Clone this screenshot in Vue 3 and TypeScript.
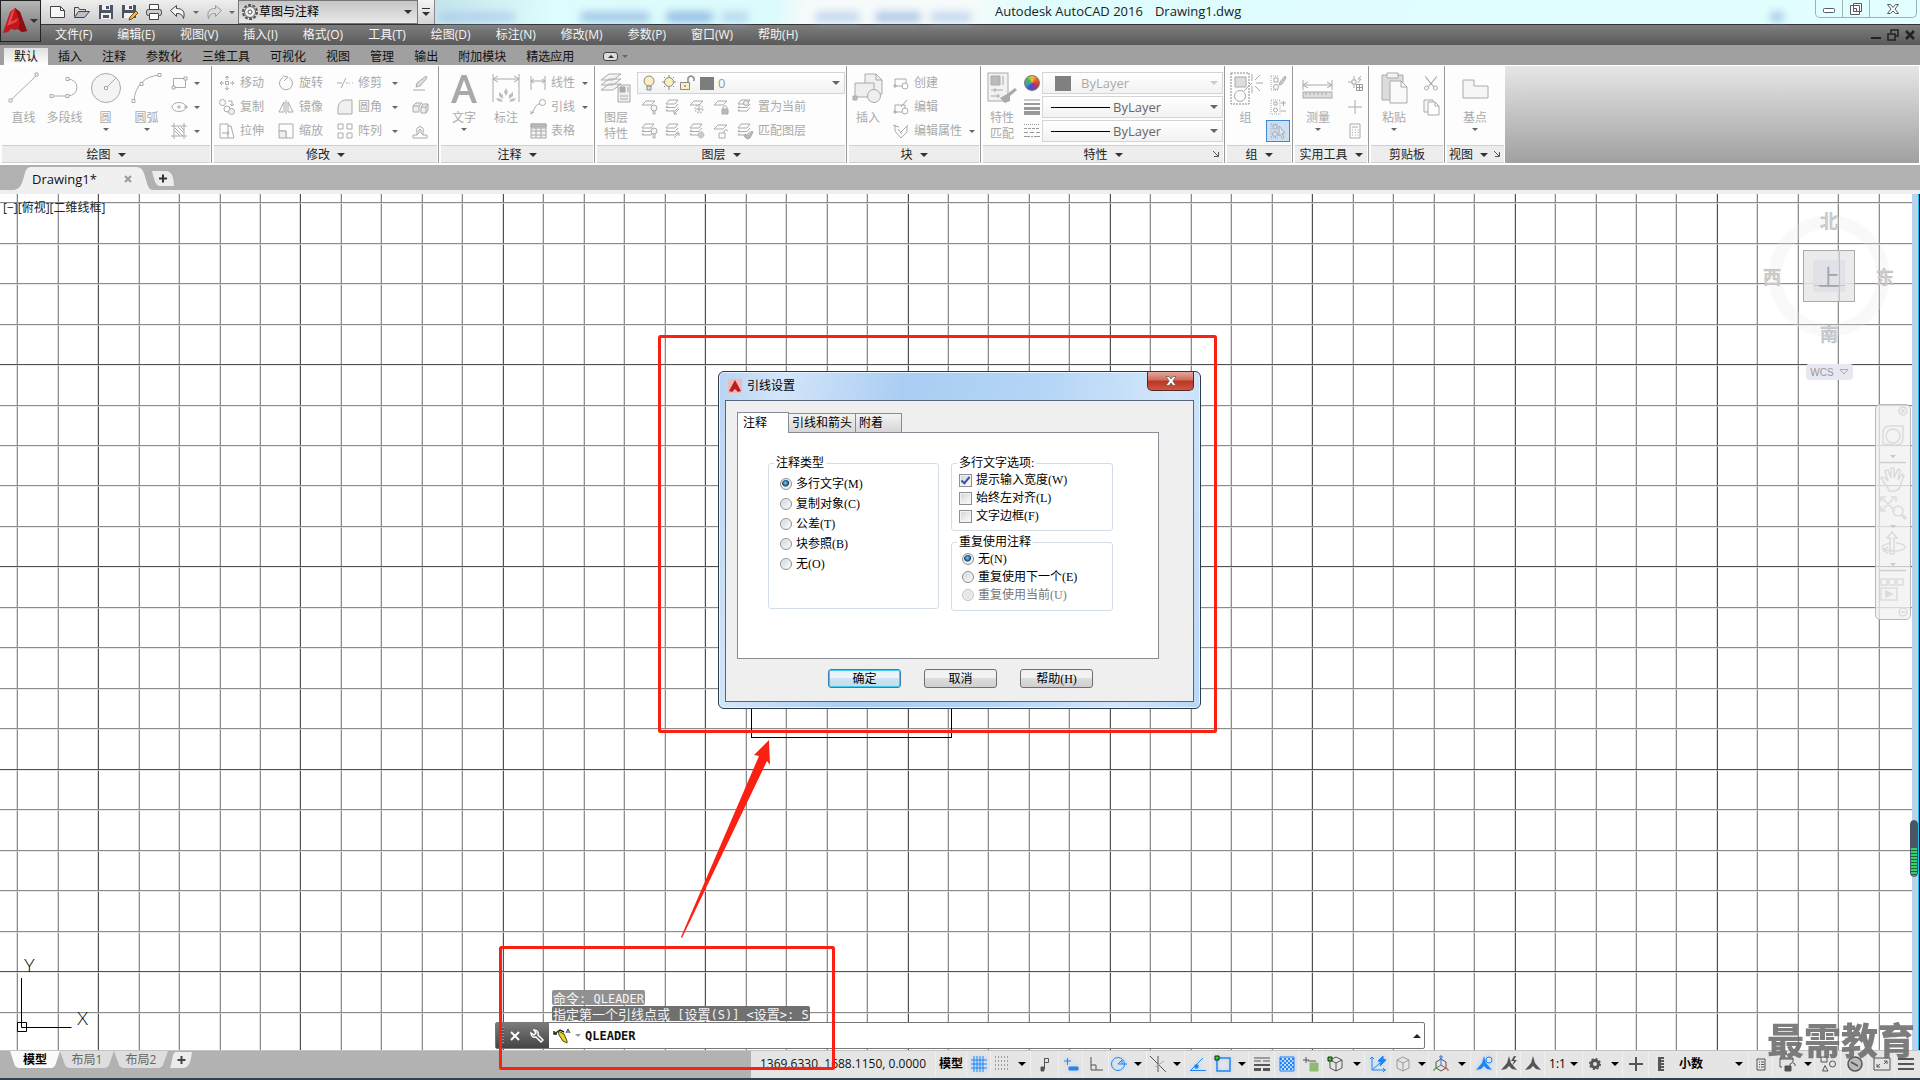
<script setup lang="ts">
import { ref } from 'vue'

interface Tool {
  icon: string
  label?: string
  arrow?: boolean
  active?: boolean
}
interface BigTool {
  icon: string
  lines: string[]
  arrow?: boolean
}
interface StatusItem {
  icon: string
  w: number
  name: string
  on?: boolean
}

const menus = ['文件(F)', '编辑(E)', '视图(V)', '插入(I)', '格式(O)', '工具(T)', '绘图(D)', '标注(N)', '修改(M)', '参数(P)', '窗口(W)', '帮助(H)']
const tabs = ['默认', '插入', '注释', '参数化', '三维工具', '可视化', '视图', '管理', '输出', '附加模块', '精选应用']

const layerStack = '<path d="M1 5l3-4h9l-3 4zM1 8.500h9l3-3.500M1 12h9l3-3.500M1 8.500l1.500-2M1 12l1.500-2"/>'
const person = '<path fill="currentColor" stroke="none" d="M8 0l2 7 6 7-5-1-3-3-3 3-5 1 6-7z"/>'
const cube = '<path d="M8 1l6 3v8l-6 3-6-3V4zM2 4l6 3 6-3M8 7v8"/>'

const icons: Record<string, string> = {
  // large ribbon glyphs, 32 x 32
  line: '<path d="M3 29L29 4"/><path fill="#fff" d="M1 28h3v3H1zM27 2h3v3h-3z"/>',
  polyline: '<path d="M2 25h17a9 8.500 0 0 0 0-17"/><path fill="#fff" d="M1 23.500h3v3H1zM17 23.500h3v3h-3zM17 6.500h3v3h-3z"/>',
  circle: '<circle cx="16" cy="17" r="14.500" fill="#f4f4f4"/><path d="M16 17L26 7"/><path fill="#fff" d="M14.500 15.500h3v3h-3z"/>',
  arc: '<path d="M3 30C4 14 14 5 29 4"/><path fill="#fff" d="M1 28.500h3v3H1zM9 11.500h3v3H9zM27 2.500h3v3h-3z"/>',
  text: '<path fill="#a9a9a9" stroke="none" fill-rule="evenodd" d="M13.500 4h5L29 32h-5l-3-8H11l-3 8H3zM16 9l-4 11h8z"/>',
  dimension: '<path d="M3 3v28M29 3v28M3 8h26M8 5L3 8l5 3M24 5l5 3-5 3"/><path fill="#bdbdbd" stroke="none" d="M16 17l2 4-2 4-2-4zM9 21l4 3v4l-4-3zM23 21l-4 3v4l4-3zM6 27l5 1 2 3-5-1zM26 27l-5 1-2 3 5-1z"/>',
  layers: '<path fill="#f4f4f4" d="M1 19l8-6h12l-8 6zM1 14l8-6h12l-8 6zM1 9l8-6h12l-8 6z"/><rect x="18" y="14" width="12" height="17" fill="#eee"/><path fill="#aaa" d="M20 16h5v5h-5z"/><path d="M28 16v5M20 25h8M20 28h8"/>',
  insert: '<path fill="#f0f0f0" d="M13 3h11l6 6v14H13z"/><path d="M24 3v6h6"/><path fill="#eee" d="M3 12h19v14H3z"/><circle cx="22" cy="25" r="6.500" fill="#eee"/><path fill="#bbb" d="M1 25h4v4H1z"/>',
  match: '<rect x="2" y="2" width="20" height="28" fill="#f2f2f2"/><path fill="#bbb" d="M5 5h9v9H5z"/><path d="M17 5v9M5 19h12M9 17v4M5 25h9M12 23v4"/><path fill="#aaa" stroke="none" d="M29 17l2 2-7 6v5l-5 2-5-5 7-4z"/>',
  group: '<rect x="1" y="2" width="18" height="31" stroke-dasharray="2 1" stroke="#888"/><path fill="#ddd" d="M5 6h11v10H5z"/><circle cx="10" cy="25" r="5.500"/><path d="M14 20l8-8M22 3v7M22 15v7M26 12h7M25 9l5-5M25 15l5 5"/>',
  measure: '<path d="M1 9v10M30 9v10M1 14h29M6 11l-5 3 5 3M25 11l5 3-5 3"/><rect x="1" y="21" width="29" height="6" fill="#ddd"/><path d="M4 21v3M8 21v3M12 21v3M16 21v3M20 21v3M24 21v3"/>',
  paste: '<path fill="#dcdcdc" d="M4 4h21v25H4z"/><path fill="#f4f4f4" d="M9 2h11v5H9z"/><path fill="#fafafa" d="M12 10h11l6 6v16H12z"/><path d="M23 10v6h6"/>',
  base: '<path fill="#f6f6f6" d="M4 9h11v6h14v12H4z"/>',
  // small ribbon glyphs, 16 x 16
  rect: '<path d="M2.500 3.500h12v9h-12z"/><path fill="#fff" d="M1 11h3v3H1zM13 2h3v3h-3z"/>',
  ellipse: '<ellipse cx="8" cy="8" rx="7" ry="4.500"/><path d="M8 6v4M6 8h4M14 7h2v2h-2z"/>',
  hatch: '<path d="M3 0v16M13 0v16M0 3h16M0 13h16M4 8l5 5M4 5l8 8M7 4l6 6M10 4l3 3"/>',
  move: '<path d="M8 1v4M8 11v4M1 8h4M11 8h4M6 3l2-2 2 2M6 13l2 2 2-2M3 6L1 8l2 2M13 6l2 2-2 2M6.500 6.500h3v3h-3z"/>',
  rotate: '<path d="M11 2.500A6.500 6.500 0 1 1 5 2.500M5 1l5 1-4 4"/>',
  trim: '<path d="M0 8h5M4 13L9 3M9 8h2M12 8h1M15 8h1"/>',
  erase: '<path fill="#ddd" d="M14 1l1 2-7 8-4 1 1-4z"/><path d="M1 15h12"/>',
  copy: '<circle cx="3.500" cy="3.500" r="3"/><circle cx="8" cy="10" r="3"/><circle cx="12.500" cy="12.500" r="3" fill="#eee"/><path d="M9 2h4v4M11 5l2 2 2-2"/>',
  mirror: '<path d="M8 1v14M6 3v10H1zM10 3v10h5z"/>',
  fillet: '<path fill="#f0f0f0" d="M1 15V9c0-5 4-8 8-8h6v14z"/>',
  explode: '<path fill="#eee" d="M1 7h6v6H1zM1 7l3-3h6L7 7M9 8h5v6H9zM9 8l2-3h5l-2 3M16 5v6l-2 3"/>',
  stretch: '<path d="M1 1h8v14H1zM9 3h3l3 12H9M3 10h7M8 8l2 2-2 2"/>',
  scale: '<path d="M1 1h14v14H8V8H1z"/><path fill="#eee" d="M1 8h7v7H1z"/>',
  array: '<path d="M1 1h5v5H1zM10 1h5v5h-5zM1 10h5v5H1zM10 10h5v5h-5z"/>',
  offset: '<path d="M1 15h14M1 15v-3h4V9a3.500 3.500 0 1 1 6 0v3h4v3M5 12l2-2V7q1-2 2 0v3l2 2"/>',
  linear: '<path d="M1 1v14M15 1v14M1 6h14M4 4L1 6l3 2M12 4l3 2-3 2"/>',
  leader: '<circle cx="12.500" cy="3.500" r="3"/><path d="M10 5C5 5 6 9 1 15M1 12v3l3-2"/>',
  table: '<rect x="1" y="1" width="15" height="14" fill="#f3f3f3"/><path d="M1 5h15M1 8h15M1 12h15M6 5v10M11 5v10"/><path fill="#bbb" d="M1 1h15v3H1z"/>',
  layOff: '<path d="M1 6l4-4h9l-4 4z"/><circle cx="13" cy="9" r="3" fill="#f4f4f4"/><path d="M12 12v3h2v-3"/>',
  layIso: layerStack + '<path d="M14 10l-5 5M9 12v3h3"/>',
  layFreeze: '<path d="M1 6l4-4h9l-4 4z"/><circle cx="10" cy="10" r="4" stroke-dasharray="2 1"/><path d="M10 7v6M7 10h6"/>',
  layLock: '<path d="M1 6l4-4h9l-4 4z"/><path fill="#bbb" d="M9 10h6v5H9z"/><path d="M10 10V8q2-3 4 0v2"/>',
  layCur: layerStack + '<circle cx="9" cy="4" r="2.500" fill="#eee"/>',
  layOn: layerStack + '<circle cx="13" cy="8" r="3" fill="#f4f4f4"/><path d="M12 11v4h2v-4"/>',
  layUniso: layerStack + '<path d="M9 15l5-5M11 10h3v3"/>',
  layThaw: layerStack + '<circle cx="12" cy="12" r="3" fill="#ccc" stroke-dasharray="1 1"/>',
  layUnlock: '<path d="M1 6l4-4h9l-4 4z"/><path d="M6 10h6v5H6zM11 10V8q2-3 4 0"/>',
  layMatch: layerStack + '<path fill="#bbb" d="M15 8l-4 5-3-2-1 2 3 3 3-1 3-6z"/>',
  create: '<path d="M2 4h11v7H2zM1 10h2v2H1z"/><circle cx="12" cy="11" r="3" fill="#fff"/>',
  edit: '<path d="M2 6h10v7H2zM1 12h2v2H1z"/><circle cx="12" cy="12" r="3" fill="#fff"/><path d="M8 8l6-7"/>',
  attrib: '<path d="M0 2l3 1M2 3v5l6 7 6-6V3M2 3l4 1M5 6l4 5M7 10l8-8"/>',
  match2: '<path stroke-dasharray="1 1" d="M1 1v14M1 1h8M1 15h8"/><path d="M4 3h4v4H4z"/><circle cx="6" cy="12" r="2.500"/><path fill="#ccc" d="M15 1l-5 6-1 3 3-1 4-6z"/>',
  groupEdit: '<path stroke-dasharray="1 1" d="M1 1h9v14H1z"/><path d="M4 3h3v3H4zM11 4h5M13.500 2v5M11 12h5"/><circle cx="5.500" cy="11" r="2"/>',
  groupSel: '<path stroke-dasharray="1 1" d="M1 1v14M1 1h8M1 15h8"/><path d="M3 2h4v4H3z"/><circle cx="5" cy="11" r="2.500"/><path fill="#dbe8f6" d="M9 3l6 7-3 .5 2 4-2 1-1.500-4L9 13z"/>',
  quickSel: '<path d="M7 1v4M7 9v4M1 7h4M5 5h4v4H5zM14 1l-3 3h3l-3 4"/><path stroke="#999" d="M9.500 9.500h6v6h-6zM9.500 12.500h6M12.500 9.500v6"/>',
  point: '<path d="M8 1v5M8 10v5M1 8h5M10 8h5M7 7h2v2H7z"/>',
  calc: '<path d="M3 1h10v14H3zM5 4h6M5 7h1M8 7h1M10.500 7h1M5 9.500h1M8 9.500h1M10.500 9.500h1M5 12h1M8 12h1M10.500 12h1"/>',
  cut: '<path d="M2 1l9 11M14 1L5 12M3 3l8 9M13 3l-8 9"/><circle cx="3.500" cy="13" r="2"/><circle cx="12.500" cy="13" r="2"/>',
  copyClip: '<path fill="#f8f8f8" d="M1 1h9v12H1z"/><path fill="#fff" d="M5 3h7l4 4v9H5zM12 3v4h4"/>',
  // status bar glyphs, 16 x 16
  grid: '<path d="M3 0v16M6 0v16M9 0v16M12 0v16M0 4h16M0 8h16M0 12h16"/>',
  snap: '<path stroke-dasharray="1 2" d="M1 1h14M1 5h14M1 9h14M1 13h14"/>',
  infer: '<path fill="currentColor" d="M4 11h3v4H4z"/><path d="M7.500 13V2M7.500 2.500h4v4h-4"/>',
  dyn: '<path d="M1 5h7M4.500 2v7"/><path fill="currentColor" d="M6 11h9v3H6z"/>',
  ortho: '<path d="M3 1v13h12M3 9h5v5"/>',
  polar: '<circle cx="7" cy="8" r="6.500"/><path d="M7 8h9M7 8l4-4M11 4v4"/>',
  iso: '<path d="M0 0l16 16M8 0v16"/><path stroke="#aaa" d="M5 11l9-6"/>',
  track: '<path d="M0 14.500h16M1 14L13 2"/><path fill="currentColor" d="M5 9h3v3H5z"/>',
  osnap: '<path d="M2 2h13v13H2z" stroke-width="1.500"/><path fill="#1ddb1d" stroke="#222" d="M0 0h4v4H0z"/>',
  lwt: '<path d="M0 2h16M9 5h7M0 5h7" stroke-width="1"/><path d="M0 9h7M7 9h9" stroke-width="2"/><path d="M0 13.500h7M9 13.500h7" stroke-width="3"/>',
  trans: '<path d="M1 1h14v14H1z"/><path stroke-width="2" stroke-dasharray="2 2" d="M1 3h14M3 5h12M1 7h14M3 9h12M1 11h14M3 13h12"/>',
  cycle: '<path d="M0 4h6M3 1v6" /><path fill="#8fba6f" stroke="#8fba6f" d="M7 7h8v8H7z"/><path d="M5 5h8"/>',
  osnap3: cube + '<path fill="#1ddb1d" stroke="#222" d="M0 1h4v4H0z"/>',
  ducs: '<path d="M2 1v13h14M0 3l2-2 2 2M13 12l2 2-2 2M2 14l8-7"/><path fill="currentColor" d="M13 0L8 5l3 1-1 4 6-6-3-1z"/>',
  filter: '<g stroke="#999">' + cube + '</g>',
  gizmo: '<path d="M8 3l5 3v6l-5 3-5-3V6z"/><path stroke="#3a7be0" d="M8 9V2M7 0h2v2H7z"/><path stroke="#2f9b2f" d="M8 9l-6 4H1v2"/><path stroke="#d33" d="M8 9l6 4h1v2"/>',
  annoVis: person + '<circle cx="13" cy="4" r="3" fill="#e5e5e5"/>',
  annoAuto: person + '<path fill="currentColor" stroke="none" d="M13 0l-3 5h3l-2 5 5-6h-3l2-4z"/>',
  anno: person,
  gear: '<circle cx="8" cy="8" r="3.500" stroke-width="3"/><circle cx="8" cy="8" r="5" stroke-width="2" stroke-dasharray="2 1.900"/>',
  plus: '<path stroke-width="2" d="M8 1v14M1 8h14"/>',
  ruler: '<path fill="currentColor" stroke="none" d="M5 1h6v2H8v1h3v2H8v1h3v2H8v1h3v2H8v1h3v2H5z"/>',
  quick: '<path d="M4 3h8v11H4zM6 6h1M8 6h3M6 8.500h1M8 8.500h3M6 11h1M8 11h3"/>',
  lockUi: '<path d="M3 11H1V2h13v4M1 3h13"/><path fill="currentColor" d="M6 10h6v5H6z"/><path d="M11 10V8q2-3 5 0v2"/>',
  isolate: '<path d="M1 1h6v5H1zM6 15l-3.500 0L5 9.500 8 15z"/><circle cx="12.500" cy="8" r="3"/>',
  hardware: '<circle cx="8" cy="8" r="7" fill="#b9b9b9" stroke-width="1.500"/><path d="M4 6l7 4" stroke-width="1.500"/>',
  clean: '<path d="M0 2h16v12H0zM3 11l3-3M3 8v3h3M13 5l-3 3M10 5h3v3"/>',
  burger: '<path stroke-width="2" d="M0 3h16M0 8h16M0 13h16"/>',
}

const drawBig: BigTool[] = [
  { icon: 'line', lines: ['直线'] },
  { icon: 'polyline', lines: ['多段线'] },
  { icon: 'circle', lines: ['圆'], arrow: true },
  { icon: 'arc', lines: ['圆弧'], arrow: true },
]
const drawSmall: Tool[] = [{ icon: 'rect', arrow: true }, { icon: 'ellipse', arrow: true }, { icon: 'hatch', arrow: true }]
const modify: Tool[][] = [
  [{ icon: 'move', label: '移动' }, { icon: 'copy', label: '复制' }, { icon: 'stretch', label: '拉伸' }],
  [{ icon: 'rotate', label: '旋转' }, { icon: 'mirror', label: '镜像' }, { icon: 'scale', label: '缩放' }],
  [{ icon: 'trim', label: '修剪', arrow: true }, { icon: 'fillet', label: '圆角', arrow: true }, { icon: 'array', label: '阵列', arrow: true }],
  [{ icon: 'erase' }, { icon: 'explode' }, { icon: 'offset' }],
]
const annotate: Tool[] = [{ icon: 'linear', label: '线性', arrow: true }, { icon: 'leader', label: '引线', arrow: true }, { icon: 'table', label: '表格' }]
const layerRows: Tool[][] = [
  [{ icon: 'layOff' }, { icon: 'layIso' }, { icon: 'layFreeze' }, { icon: 'layLock' }, { icon: 'layCur', label: '置为当前' }],
  [{ icon: 'layOn' }, { icon: 'layUniso' }, { icon: 'layThaw' }, { icon: 'layUnlock' }, { icon: 'layMatch', label: '匹配图层' }],
]
const block: Tool[] = [{ icon: 'create', label: '创建' }, { icon: 'edit', label: '编辑' }, { icon: 'attrib', label: '编辑属性', arrow: true }]
const groupTools: Tool[] = [{ icon: 'match2' }, { icon: 'groupEdit' }, { icon: 'groupSel', active: true }]
const utilTools: Tool[] = [{ icon: 'quickSel' }, { icon: 'point' }, { icon: 'calc' }]
const clipTools: Tool[] = [{ icon: 'cut' }, { icon: 'copyClip' }]

const statusA: StatusItem[] = [
  { icon: 'grid', w: 24, name: '栅格', on: true }, { icon: 'snap', w: 22, name: '捕捉' }, { icon: 'arrow', w: 18, name: '捕捉设置' },
  { icon: 'infer', w: 28, name: '推断约束' }, { icon: 'dyn', w: 24, name: '动态输入', on: true }, { icon: 'ortho', w: 26, name: '正交' },
  { icon: 'polar', w: 20, name: '极轴追踪', on: true }, { icon: 'arrow', w: 18, name: '极轴设置' }, { icon: 'iso', w: 22, name: '等轴测' },
  { icon: 'arrow', w: 16, name: '等轴测设置' }, { icon: 'track', w: 26, name: '对象捕捉追踪', on: true }, { icon: 'osnap', w: 24, name: '对象捕捉', on: true },
  { icon: 'arrow', w: 14, name: '对象捕捉设置' }, { icon: 'lwt', w: 26, name: '线宽' }, { icon: 'trans', w: 24, name: '透明度', on: true },
  { icon: 'cycle', w: 24, name: '选择循环' }, { icon: 'osnap3', w: 26, name: '三维对象捕捉' }, { icon: 'arrow', w: 16, name: '三维捕捉设置' },
  { icon: 'ducs', w: 26, name: '动态 UCS', on: true }, { icon: 'filter', w: 24, name: '选择过滤' }, { icon: 'arrow', w: 14, name: '过滤设置' },
  { icon: 'gizmo', w: 24, name: '小控件' }, { icon: 'arrow', w: 18, name: '小控件设置' }, { icon: 'annoVis', w: 26, name: '注释可见性', on: true },
  { icon: 'annoAuto', w: 24, name: '自动缩放' }, { icon: 'anno', w: 24, name: '注释比例' },
]
const statusB: StatusItem[] = [
  { icon: 'gear', w: 24, name: '切换工作空间' }, { icon: 'arrow', w: 16, name: '工作空间设置' }, { icon: 'plus', w: 26, name: '注释监视器' }, { icon: 'ruler', w: 24, name: '单位' },
]
const statusC: StatusItem[] = [
  { icon: 'quick', w: 24, name: '快捷特性' }, { icon: 'lockUi', w: 28, name: '锁定用户界面' }, { icon: 'arrow', w: 14, name: '锁定设置' },
  { icon: 'isolate', w: 26, name: '隔离对象' }, { icon: 'hardware', w: 28, name: '硬件加速' }, { icon: 'clean', w: 26, name: '全屏显示' }, { icon: 'burger', w: 22, name: '自定义' },
]

// drawing grid: every fifth line is a major one
const PITCH = 40.47
const vLines = Array.from({ length: 100 }, (_, i) => ({ at: Math.round(17.2 + i * PITCH), major: i % 5 === 2 }))
const hLines = Array.from({ length: 60 }, (_, i) => ({ at: Math.round(8.2 + i * PITCH), major: i % 5 === 4 }))

const annotationTypes = [
  { key: 'M', label: '多行文字(M)' },
  { key: 'C', label: '复制对象(C)' },
  { key: 'T', label: '公差(T)' },
  { key: 'B', label: '块参照(B)' },
  { key: 'O', label: '无(O)' },
]
const reuseTypes = [
  { key: 'N', label: '无(N)', off: false },
  { key: 'E', label: '重复使用下一个(E)', off: false },
  { key: 'U', label: '重复使用当前(U)', off: true },
]
const annotationType = ref('M')
const reuse = ref('N')
const mtext = ref([
  { label: '提示输入宽度(W)', on: true },
  { label: '始终左对齐(L)', on: false },
  { label: '文字边框(F)', on: false },
])
const command = ref('QLEADER')
</script>

<template>
  <div class="app">
    <header class="top">
      <button class="logo" aria-label="应用程序菜单">
        <svg width="24" height="26" viewBox="0 0 24 26"><path fill="#c4161c" d="M12 0l5 4 7 19-5 1-4-3-3 1-4-1-3 3-5 1 7-21z" /><path fill="#8c0f14" d="M12 0l5 4 7 19-5 1-4-3 2-6z" /><path fill="#e8474b" d="M12 0L8 14l8-4-3 4-9 4 4-13z" /></svg>
        <i class="tri"></i>
      </button>
      <div class="top-rows">
        <div class="title-bar">
          <div class="quick">
            <button aria-label="新建"><svg width="18" height="16" viewBox="0 0 18 16"><path fill="#f7f7f7" stroke="#444" d="M1.500 2.500h10l4 4v7h-14z" /><path fill="none" stroke="#444" d="M11.500 2.500v4h4" /></svg></button>
            <button aria-label="打开"><svg width="18" height="16" viewBox="0 0 18 16"><path fill="#ddd" stroke="#444" d="M1.500 12.500v-9h4l1 2h6v2" /><path fill="#b9c0c8" stroke="#444" d="M1.500 13.500l4-6h11l-5 6z" /></svg></button>
            <button aria-label="保存"><svg width="18" height="16" viewBox="0 0 18 16"><path fill="#4b5564" d="M2 1h14v14H2z" /><path fill="#f2f2f2" d="M5 1h8v5H5zM4 9h10v6H4z" /><path fill="#4b5564" d="M9 2h3v3H9zM6 11h6v3H6z" /></svg></button>
            <button aria-label="另存为"><svg width="18" height="18" viewBox="0 0 18 18"><path fill="#4b5564" d="M1 2h14v13H1z" /><path fill="#f2f2f2" d="M4 2h8v5H4zM3 10h9v5H3z" /><path fill="#4b5564" d="M8 3h3v3H8z" /><path fill="#f3b54a" stroke="#7a5018" d="M15 8l2 2-6 6-3 1 1-3z" /></svg></button>
            <button aria-label="打印"><svg width="18" height="16" viewBox="0 0 18 16"><path fill="#fff" stroke="#444" d="M4.500 5.500v-5h9v5" /><rect x="1.500" y="5.500" width="15" height="6" rx="2" fill="#ccc" stroke="#444" /><path fill="#fff" stroke="#444" d="M4.500 9.500h9v6h-9z" /></svg></button>
            <button aria-label="放弃"><svg width="18" height="16" viewBox="0 0 18 16"><path fill="#f4f4f4" stroke="#444" d="M1.500 6.500l6-5v3c6 0 9 3 7 10-1-4-3-5-7-5v3z" /></svg></button>
            <button class="narrow" aria-label="放弃列表"><i class="tri sm"></i></button>
            <button aria-label="重做"><svg width="18" height="16" viewBox="0 0 18 16"><path fill="#ddd" stroke="#999" d="M16.500 6.500l-6-5v3c-6 0-9 3-7 10 1-4 3-5 7-5v3z" /></svg></button>
            <button class="narrow" aria-label="重做列表"><i class="tri sm"></i></button>
          </div>
          <div class="workspace">
            <svg width="18" height="18" viewBox="0 0 18 18"><circle cx="9" cy="9" r="7" fill="#eee" stroke="#555" stroke-width="2" stroke-dasharray="3 1.400" /><circle cx="9" cy="9" r="5.500" fill="#eee" stroke="#555" /><circle cx="9" cy="9" r="2" fill="#fff" stroke="#555" /></svg>
            <select aria-label="工作空间"><option>草图与注释</option></select>
            <i class="tri"></i>
          </div>
          <button class="qa-more" aria-label="自定义快速访问工具栏"><b></b><i class="tri"></i></button>
          <div class="aero">
            <span class="ghost g1"></span><span class="ghost g2"></span><span class="ghost g3"></span><span class="ghost g4"></span>
            <span class="ghost g5"></span><span class="ghost g6"></span><span class="ghost g7"></span><span class="ghost g8"></span>
            <h1><span>Autodesk AutoCAD 2016</span><span>Drawing1.dwg</span></h1>
            <div class="win-buttons">
              <button aria-label="最小化"><svg width="14" height="12" viewBox="0 0 14 12"><rect x="1.500" y="5.500" width="11" height="4" rx="1" fill="#fff" stroke="#555b66" /></svg></button>
              <button aria-label="还原"><svg width="14" height="12" viewBox="0 0 14 12"><path fill="#fff" stroke="#555b66" d="M4.500.5h8v8h-8zM1.500 2.500h9v9h-9z" /><path fill="none" stroke="#555b66" d="M4.500 5.500h3v3h-3z" /></svg></button>
              <button aria-label="关闭"><svg width="14" height="12" viewBox="0 0 14 12"><path fill="#fff" stroke="#555b66" d="M1.500 1.500h3l2.500 3 2.500-3h3L9 6l3.500 4.500h-3L7 8l-2.500 2.500h-3L5 6z" /></svg></button>
            </div>
          </div>
        </div>
        <nav class="menu-bar">
          <a v-for="m in menus" :key="m" href="#">{{ m }}</a>
          <div class="doc-buttons">
            <button aria-label="最小化图形"><svg width="12" height="12" viewBox="0 0 12 12"><path stroke="#222" stroke-width="2" d="M1 9h10" /></svg></button>
            <button aria-label="还原图形"><svg width="12" height="12" viewBox="0 0 12 12"><path fill="none" stroke="#222" stroke-width="1.500" d="M4 4V1h7v6H8M1 5h7v6H1z" /></svg></button>
            <button aria-label="关闭图形"><svg width="12" height="12" viewBox="0 0 12 12"><path stroke="#222" stroke-width="2.500" d="M2 2l8 8M10 2l-8 8" /></svg></button>
          </div>
        </nav>
      </div>
    </header>

    <nav class="tabs">
      <button v-for="(t, i) in tabs" :key="t" :class="{ current: i === 0 }">{{ t }}</button>
      <button class="collapse" aria-label="最小化功能区"><span><i></i></span><i class="tri sm"></i></button>
    </nav>

    <section class="ribbon">
      <div class="panel p-draw">
        <div class="body">
          <button v-for="b in drawBig" :key="b.icon" class="big">
            <svg viewBox="0 0 32 32" v-html="icons[b.icon]"></svg>
            <span v-for="l in b.lines" :key="l">{{ l }}</span>
            <i v-if="b.arrow" class="tri sm"></i>
          </button>
          <div class="col after-big">
            <button v-for="t in drawSmall" :key="t.icon" class="tool" :aria-label="t.icon">
              <svg viewBox="0 0 16 16" v-html="icons[t.icon]"></svg><i class="tri sm"></i>
            </button>
          </div>
        </div>
        <h2>绘图<i class="tri"></i></h2>
      </div>

      <div class="panel p-modify">
        <div class="body">
          <div v-for="(c, i) in modify" :key="i" class="col">
            <button v-for="t in c" :key="t.icon" class="tool" :aria-label="t.icon">
              <svg viewBox="0 0 16 16" v-html="icons[t.icon]"></svg><span v-if="t.label">{{ t.label }}</span><i v-if="t.arrow" class="tri sm"></i>
            </button>
          </div>
        </div>
        <h2>修改<i class="tri"></i></h2>
      </div>

      <div class="panel p-annotate">
        <div class="body">
          <button class="big"><svg viewBox="0 0 32 32" v-html="icons.text"></svg><span>文字</span><i class="tri sm"></i></button>
          <button class="big"><svg viewBox="0 0 32 32" v-html="icons.dimension"></svg><span>标注</span></button>
          <div class="col after-big">
            <button v-for="t in annotate" :key="t.icon" class="tool">
              <svg viewBox="0 0 16 16" v-html="icons[t.icon]"></svg><span>{{ t.label }}</span><i v-if="t.arrow" class="tri sm"></i>
            </button>
          </div>
        </div>
        <h2>注释<i class="tri"></i></h2>
      </div>

      <div class="panel p-layers">
        <div class="body">
          <button class="big"><svg viewBox="0 0 32 32" v-html="icons.layers"></svg><span>图层</span><span>特性</span></button>
          <div class="col grow">
            <div class="combo">
              <svg width="74" height="18" viewBox="0 0 74 18">
                <circle cx="11" cy="7" r="5" fill="#fdeec0" stroke="#8a8a8a" /><path fill="#ddd" stroke="#8a8a8a" d="M9 12h4v4H9z" />
                <circle cx="31" cy="8" r="4.500" fill="#fdeec0" stroke="#8a8a8a" /><path stroke="#8a8a8a" d="M31 1v2M31 13v3M24 8h2M36 8h2M26 3l1 1M36 3l-1 1M26 13l1-1M36 13l-1-1" />
                <path fill="#fdeec0" stroke="#8a8a8a" d="M42.500 8.500h9v7h-9z" /><path fill="none" stroke="#8a8a8a" stroke-width="1.500" d="M50 8V4q3-4 6 0v3M47 11v2" />
                <path fill="#7d7d7d" d="M62 3h14v13H62z" />
              </svg>
              <i class="swatch slim"></i>
              <select aria-label="图层"><option>0</option></select>
              <i class="tri"></i>
            </div>
            <div v-for="(r, i) in layerRows" :key="i" class="tool-row">
              <button v-for="t in r" :key="t.icon" class="tool cell" :aria-label="t.icon">
                <svg viewBox="0 0 16 16" v-html="icons[t.icon]"></svg><span v-if="t.label">{{ t.label }}</span>
              </button>
            </div>
          </div>
        </div>
        <h2>图层<i class="tri"></i></h2>
      </div>

      <div class="panel p-block">
        <div class="body">
          <button class="big"><svg viewBox="0 0 32 32" v-html="icons.insert"></svg><span>插入</span></button>
          <div class="col after-big">
            <button v-for="t in block" :key="t.icon" class="tool">
              <svg viewBox="0 0 16 16" v-html="icons[t.icon]"></svg><span>{{ t.label }}</span><i v-if="t.arrow" class="tri sm"></i>
            </button>
          </div>
        </div>
        <h2>块<i class="tri"></i></h2>
      </div>

      <div class="panel p-props">
        <div class="body">
          <button class="big"><svg viewBox="0 0 32 32" v-html="icons.match"></svg><span>特性</span><span>匹配</span></button>
          <div class="col grow">
            <div class="prop-row">
              <i class="wheel"></i>
              <div class="combo faint"><i class="swatch"></i><select aria-label="对象颜色"><option>ByLayer</option></select><i class="tri"></i></div>
            </div>
            <div class="prop-row">
              <svg width="16" height="16" viewBox="0 0 16 16"><path stroke="#999" d="M0 1h16" /><path stroke="#999" stroke-width="2" d="M0 5h16" /><path stroke="#999" stroke-width="3" d="M0 9.500h16" /><path stroke="#999" stroke-width="4" d="M0 14h16" /></svg>
              <div class="combo"><i class="rule"></i><select aria-label="线宽"><option>ByLayer</option></select><i class="tri"></i></div>
            </div>
            <div class="prop-row">
              <svg width="16" height="16" viewBox="0 0 16 16"><g stroke="#999"><path stroke-dasharray="1 1" d="M0 1.500h16" /><path stroke-dasharray="3 1" d="M0 5.500h16" /><path stroke-dasharray="4 2" d="M0 9.500h16" /><path stroke-dasharray="6 1 2 1" d="M0 13.500h16" /></g></svg>
              <div class="combo"><i class="rule"></i><select aria-label="线型"><option>ByLayer</option></select><i class="tri"></i></div>
            </div>
          </div>
        </div>
        <h2>特性<i class="tri"></i><svg class="launch" width="8" height="8" viewBox="0 0 8 8"><path fill="none" stroke="#555" d="M1 1l5 5M6.500 2v4.500H2" /></svg></h2>
      </div>

      <div class="panel p-group">
        <div class="body">
          <button class="big"><svg viewBox="0 0 32 32" v-html="icons.group"></svg><span>组</span></button>
          <div class="col">
            <button v-for="t in groupTools" :key="t.icon" class="tool cell" :class="{ active: t.active }" :aria-label="t.icon"><svg viewBox="0 0 16 16" v-html="icons[t.icon]"></svg></button>
          </div>
        </div>
        <h2>组<i class="tri"></i></h2>
      </div>

      <div class="panel p-util">
        <div class="body">
          <button class="big"><svg viewBox="0 0 32 32" v-html="icons.measure"></svg><span>测量</span><i class="tri sm"></i></button>
          <div class="col">
            <button v-for="t in utilTools" :key="t.icon" class="tool cell" :aria-label="t.icon"><svg viewBox="0 0 16 16" v-html="icons[t.icon]"></svg></button>
          </div>
        </div>
        <h2>实用工具<i class="tri"></i></h2>
      </div>

      <div class="panel p-clip">
        <div class="body">
          <button class="big"><svg viewBox="0 0 32 32" v-html="icons.paste"></svg><span>粘贴</span><i class="tri sm"></i></button>
          <div class="col">
            <button v-for="t in clipTools" :key="t.icon" class="tool cell" :aria-label="t.icon"><svg viewBox="0 0 16 16" v-html="icons[t.icon]"></svg></button>
          </div>
        </div>
        <h2>剪贴板</h2>
      </div>

      <div class="panel p-view">
        <div class="body">
          <button class="big"><svg viewBox="0 0 32 32" v-html="icons.base"></svg><span>基点</span><i class="tri sm"></i></button>
        </div>
        <h2 class="left">视图<i class="tri"></i><svg class="launch" width="8" height="8" viewBox="0 0 8 8"><path fill="none" stroke="#555" d="M1 1l5 5M6.500 2v4.500H2" /></svg></h2>
      </div>
    </section>

    <div class="doc-tabs">
      <div class="doc-tab">
        <svg class="shape" width="138" height="23" viewBox="0 0 138 23"><path fill="#f0f0f0" d="M0 23c5-1 7-4 9-10S11 0 17 0h105c7 0 8 6 10 13s3 9 6 10z" /></svg>
        <span>Drawing1*</span>
        <button aria-label="关闭 Drawing1"><svg width="8" height="8" viewBox="0 0 8 8"><path stroke="#999" stroke-width="2" d="M1 1l6 6M7 1L1 7" /></svg></button>
      </div>
      <button class="new-doc" aria-label="新图形"><svg width="22" height="15" viewBox="0 0 22 15"><path fill="#ececec" d="M0 0h14c6 0 8 7 8 15H8C3 15 2 7 0 0z" /><path stroke="#333" stroke-width="2" d="M11 3.500v8M7 7.500h8" /></svg></button>
    </div>

    <main class="canvas">
      <svg class="grid" aria-hidden="true" shape-rendering="crispEdges">
        <g v-for="l in vLines" :key="'v' + l.at"><rect :x="l.at - 1" y="0" width="2" height="100%" fill="#dcdcdc" /><rect :x="l.at" y="0" width="1" height="100%" :fill="l.major ? '#505050' : '#8c8c8c'" /></g>
        <g v-for="l in hLines" :key="'h' + l.at"><rect x="0" :y="l.at + 1" width="100%" height="1" fill="#dcdcdc" fill-opacity="0.6" /><rect x="0" :y="l.at" width="100%" height="1" :fill="l.major ? '#505050' : '#8c8c8c'" /></g>
      </svg>
      <p class="view-label">[−][俯视][二维线框]</p>

      <svg class="cube" width="134" height="170" viewBox="0 0 134 170">
        <circle cx="67" cy="72" r="54" fill="none" stroke="#e6e6e6" stroke-opacity=".25" stroke-width="13" />
        <rect x="41.500" y="46.500" width="51" height="51" fill="#e8e8e8" fill-opacity=".85" stroke="#aaa" />
        <path fill="#dfe0e6" fill-opacity=".8" d="M51 56h32v32H51z" />
        <path stroke="#c4c4c4" d="M52 81.500h31M77.500 46v51" />
        <text x="67" y="81" font-size="22" fill="#a4a4a8" text-anchor="middle">上</text>
        <g font-size="18" font-weight="500" fill="#d4d4d4" stroke="#b4b4b4" stroke-width=".5" text-anchor="middle">
          <text x="67" y="24">北</text><text x="10" y="80">西</text><text x="123" y="80">东</text><text x="67" y="137">南</text>
        </g>
      </svg>
      <button class="wcs">WCS <svg width="10" height="6" viewBox="0 0 10 6"><path fill="none" stroke="#aaa" d="M1 .5h8L5 5z" /></svg></button>

      <div class="nav-bar">
        <svg width="34" height="214" viewBox="0 0 34 214" fill="none" stroke="#dadcdc" stroke-width="1.500">
          <circle cx="27" cy="6" r="4" /><path d="M25 4l4 4M29 4l-4 4" />
          <path d="M7 39V28q0-7 7-7h13v12q0 7-8 7z" /><circle cx="17" cy="31" r="7" /><path stroke="#d0d0d0" d="M4 57.500h26M4 165.500h26" />
          <path d="M12 83L5 73l3-1 4 4-3-10 3-1 3 8v-10h3v10l4-9 2 1-2 10 4-6 2 1-5 14-4 2h-6z" />
          <path d="M5 92l14 14M19 92L5 106M5 97v-5h5M15 92h5v5M5 101v5h5" /><circle cx="22" cy="106" r="5" /><path stroke-width="3" d="M26 110l4 4" />
          <path d="M14 149v-16h-3l5-6 5 6h-3v16zM14 138c-12 3-10 7 3 8 15 0 16-7 3-8M12 142l-5 3 5 3" />
          <path d="M5 174h6v6H5zM13 174h6v6h-6zM21 174h6v6h-6zM5 183h16v12H5z" /><path fill="#dadcdc" d="M10 186l6 3-6 3z" />
          <circle cx="27" cy="207" r="4" /><path d="M25 207h4" />
          <path fill="#c8c8c8" stroke="none" d="M14 50h6l-3 3zM14 120h6l-3 3zM14 158h6l-3 3z" />
        </svg>
      </div>
      <div class="edge"></div>
      <div class="meter"></div>

      <svg class="ucs" width="80" height="80" viewBox="0 0 80 80">
        <path fill="none" stroke="#000" d="M5.500 64.500V20M5.500 69.500h50M1.500 64.500h9v9h-9zM5.500 64v5.500" />
        <text x="8" y="14">Y</text><text x="61" y="67">X</text>
      </svg>

      <div class="sketch"></div>

      <section class="dialog" role="dialog" aria-labelledby="dlg-title">
        <header>
          <svg width="14" height="14" viewBox="0 0 14 14"><path fill="#f0b9b9" d="M0 0h14v14H0z" /><path fill="#b81e24" d="M7 1l6 11-3 1-3-3-3 3-3-1z" /></svg>
          <h2 id="dlg-title">引线设置</h2>
          <button class="x" aria-label="关闭对话框"><svg width="12" height="10" viewBox="0 0 12 10"><path fill="#fff" stroke="#555" stroke-width=".7" d="M1 .5h3l2 2.500L8 .5h3L7.800 5 11 9.500H8L6 7 4 9.500H1L4.200 5z" /></svg></button>
        </header>
        <form class="sheet" @submit.prevent>
          <div class="sheet-tabs"><button type="button" class="on">注释</button><button type="button">引线和箭头</button><button type="button" class="last">附着</button></div>
          <div class="page">
            <fieldset class="types">
              <legend>注释类型</legend>
              <label v-for="o in annotationTypes" :key="o.key"><input v-model="annotationType" type="radio" name="atype" :value="o.key" />{{ o.label }}</label>
            </fieldset>
            <div class="side">
              <fieldset class="mtext">
                <legend>多行文字选项:</legend>
                <label v-for="o in mtext" :key="o.label"><input v-model="o.on" type="checkbox" />{{ o.label }}</label>
              </fieldset>
              <fieldset class="reuse">
                <legend>重复使用注释</legend>
                <label v-for="o in reuseTypes" :key="o.key" :class="{ off: o.off }"><input v-model="reuse" type="radio" name="reuse" :value="o.key" :disabled="o.off" />{{ o.label }}</label>
              </fieldset>
            </div>
          </div>
          <div class="actions"><button class="ok">确定</button><button type="button">取消</button><button type="button">帮助(H)</button></div>
        </form>
      </section>

      <div class="command">
        <p class="hist old">命令<span>: QLEADER</span></p>
        <p class="hist">指定第一个引线点或<span>&nbsp;[</span>设置<span>(S)]&nbsp;&lt;</span>设置<span>&gt;: S</span></p>
        <div class="bar">
          <div class="grip"><i></i>
            <button aria-label="关闭命令行"><svg width="10" height="10" viewBox="0 0 10 10"><path stroke="#fff" stroke-width="2" d="M1 1l8 8M9 1L1 9" /></svg></button>
            <button aria-label="自定义"><svg width="14" height="14" viewBox="0 0 14 14"><path fill="none" stroke="#fff" stroke-width="1.500" d="M1 4l3 2 2-2-2-3c3 0 5 2 4 5l5 5-2 2-5-5C3 9 1 7 1 4z" /></svg></button>
          </div>
          <svg width="18" height="16" viewBox="0 0 18 16"><path fill="none" stroke="#222" stroke-width="1.500" d="M1 6l6-4 4 2M1 3v3h3" /><path fill="#e8d231" stroke="#554c00" d="M5 3l6 3 3 7v2l-4-2-4-6z" /><path fill="none" stroke="#246" d="M13 5l2-4 2 4M14 4h2" /></svg>
          <i class="tri sm grey"></i>
          <input v-model="command" aria-label="命令" />
          <i class="up-tri"></i>
        </div>
      </div>
    </main>

    <footer class="status">
      <div class="layouts">
        <button class="current"><span>模型</span></button><button><span>布局1</span></button><button><span>布局2</span></button>
        <button class="add" aria-label="新建布局"><svg width="22" height="16" viewBox="0 0 22 16"><path fill="#ececec" d="M6 0h16c-1 9-3 16-9 16H0c2-3 2-16 6-16z" /><path stroke="#444" stroke-width="2" d="M11.500 4v8M7.500 8h8" /></svg></button>
      </div>
      <div class="status-right">
        <span class="coords">1369.6330, 1688.1150, 0.0000</span>
        <button class="model">模型</button>
        <button v-for="s in statusA" :key="s.name" :aria-label="s.name" :class="{ on: s.on, bare: s.icon === 'arrow' }" :style="{ width: s.w + 'px' }">
          <i v-if="s.icon === 'arrow'" class="tri"></i><svg v-else viewBox="0 0 16 16" v-html="icons[s.icon]"></svg>
        </button>
        <button class="ratio">1:1<i class="tri"></i></button>
        <button v-for="s in statusB" :key="s.name" :aria-label="s.name" :class="{ bare: s.icon === 'arrow' }" :style="{ width: s.w + 'px' }">
          <i v-if="s.icon === 'arrow'" class="tri"></i><svg v-else viewBox="0 0 16 16" v-html="icons[s.icon]"></svg>
        </button>
        <div class="units"><select aria-label="图形单位"><option>小数</option></select><i class="tri"></i></div>
        <button v-for="s in statusC" :key="s.name" :aria-label="s.name" :class="{ bare: s.icon === 'arrow' }" :style="{ width: s.w + 'px' }">
          <i v-if="s.icon === 'arrow'" class="tri"></i><svg v-else viewBox="0 0 16 16" v-html="icons[s.icon]"></svg>
        </button>
      </div>
    </footer>

    <svg class="marks" width="960" height="1080" viewBox="0 0 960 1080" aria-hidden="true">
      <g fill="none" stroke="#fb2012" stroke-width="3"><rect x="179.500" y="336.500" width="556" height="395" rx="1" /><rect x="20.500" y="947.500" width="333" height="121" rx="1" /></g>
      <path fill="#fb2012" d="M289 740l-15 15 5 1-78 181 1 1 85-177 3 4z" />
    </svg>
    <p class="watermark">最需教育</p>
  </div>
</template>

<style>
html, body { margin: 0; background: #b2b2b2; }
</style>

<style scoped>
.app { position: relative; display: flex; flex-direction: column; min-height: 100vh; overflow: hidden; font: 12px/16px "Open Sans", "Noto Sans CJK SC", sans-serif; color: #222; }
.app *, .app *::before { box-sizing: border-box; }
button { padding: 0; border: 0; background: none; font: inherit; color: inherit; display: flex; align-items: center; justify-content: center; }
select { appearance: none; border: 0; background: none; font: inherit; color: inherit; padding: 0; outline: 0; }
h1, h2, p { margin: 0; font-weight: 400; font-size: 12px; }
svg { flex: none; overflow: visible; }
a { color: inherit; text-decoration: none; }
.tri { flex: none; width: 0; height: 0; border: 4px solid transparent; border-top-color: #333; border-bottom: 0; }
.tri.sm { border-width: 3px; border-bottom: 0; border-top-color: #666; }

.top { display: flex; height: 45px; background: linear-gradient(#aaa, #5a5a5a); }
.logo { width: 41px; height: 42px; gap: 3px; border: 1px solid #222; background: linear-gradient(#b5b5b5, #6c6c6c); }
.top-rows { flex: 1; display: flex; flex-direction: column; }
.title-bar { height: 25px; display: flex; border-bottom: 1px solid #333; }
.quick { width: 197px; padding-left: 5px; display: flex; background: linear-gradient(#efefef, #cdcdcd); }
.quick button { width: 24px; }
.quick .narrow { width: 12px; }
.workspace { width: 180px; display: flex; align-items: center; padding: 0 5px 0 2px; border: 1px solid #777; background: linear-gradient(#c6c6c6, #e8e8e8); color: #000; }
.workspace select, .combo select, .units select { flex: 1; min-width: 0; }
.qa-more { width: 17px; flex-direction: column; gap: 3px; border-right: 1px solid #888; background: linear-gradient(#f4f4f4, #d5d5d5); }
.qa-more b { width: 8px; height: 1px; background: #333; }
.aero { position: relative; flex: 1; display: flex; background: linear-gradient(100deg, #c4e4ec, #dcfdfd 8%, #dcfbfc 23%, #f6fafa 25%, #f8fbfb 36%, #dffcfd 40%, #e2fefe); }
.aero h1 { position: relative; margin-left: 560px; font-size: 13px; line-height: 23px; color: #222; display: flex; gap: 12px; }
.ghost { position: absolute; top: 12px; height: 10px; border-radius: 4px; background: #9dbfe6; filter: blur(4px); opacity: .6; }
.g1 { left: 4px; width: 76px; }
.g2 { left: 145px; width: 70px; background: #7ba3d6; }
.g3 { left: 231px; width: 47px; background: #5f8fd0; }
.g4 { left: 286px; width: 28px; }
.g5 { left: 380px; width: 45px; }
.g6 { left: 440px; width: 46px; background: #7ba3d6; }
.g7 { left: 495px; width: 42px; }
.g8 { right: 136px; width: 14px; background: #7ba3d6; }
.win-buttons { position: relative; display: flex; height: 18px; margin: 0 3px 0 auto; border: 1px solid #9fb0b3; border-top: 0; border-radius: 0 0 5px 5px; }
.win-buttons button { width: 27px; border-right: 1px solid #9fb0b3; }
.win-buttons button:last-child { width: 46px; border: 0; }
.menu-bar { height: 20px; display: flex; align-items: center; gap: 25px; padding-left: 14px; color: #f4f4f4; }
.doc-buttons { display: flex; gap: 5px; margin: 0 4px 0 auto; }

.tabs { height: 20px; padding: 3px 0 0 4px; display: flex; background: #a0a0a0; color: #111; }
.tabs button { padding: 0 10px; line-height: 17px; }
.tabs button.current { background: linear-gradient(#e0e0e0, #fff); }
.tabs .collapse { margin-left: 9px; gap: 4px; }
.collapse span { width: 15px; height: 9px; border: 1px solid #444; border-radius: 3px; background: #ddd; display: flex; align-items: center; justify-content: center; }
.collapse span i { border: 3px solid transparent; border-bottom-color: #333; border-top: 0; }

.ribbon { height: 100px; display: flex; border: 1px solid #fff; border-width: 1px 1px 2px 0; background: linear-gradient(#e6e6e6, #a0a0a0); }
.panel { position: relative; display: flex; flex-direction: column; border-right: 1px solid #999; background: #fdfdfd; color: #aaa; }
.p-draw { width: 212px; } .p-modify { width: 227px; } .p-annotate { width: 156px; } .p-layers { width: 252px; } .p-block { width: 134px; }
.p-props { width: 244px; } .p-group { width: 68px; } .p-util, .p-clip { width: 76px; } .p-view { width: 60px; border-right: 0; }
.body { flex: 1; display: flex; padding-top: 5px; }
.panel h2 { height: 18px; margin: 0 1px 0 2px; padding-top: 1px; display: flex; align-items: center; justify-content: center; gap: 7px; background: #ededed; border: 1px solid #cfcfcf; border-width: 1px 0; color: #222; }
.panel h2.left { justify-content: flex-start; padding-left: 2px; }
.launch { position: absolute; right: 4px; bottom: 5px; }
.big { width: 42px; flex-direction: column; justify-content: flex-start; }
.big svg { width: 32px; height: 32px; margin-bottom: 7px; fill: none; stroke: #aaa; }
.big .tri { margin-top: 2px; }
.p-draw .body { padding-left: 3px; }
.p-draw .big { width: 41px; }
.p-annotate .body { padding-left: 4px; }
.p-annotate .after-big { margin-left: 3px; }
.p-util .big, .p-clip .big { width: 50px; }
.p-view .big { width: 60px; }
.p-group .big { width: 41px; }
.col { display: flex; flex-direction: column; align-items: flex-start; }
.after-big { margin-left: 4px; }
.grow { flex: 1; align-items: stretch; }
.p-modify .body { gap: 14px; padding-left: 7px; }
.tool { height: 24px; gap: 5px; justify-content: flex-start; }
.tool svg { width: 16px; height: 16px; fill: none; stroke: #aaa; }
.tool .tri { margin-left: 2px; }
.p-modify .tool .tri { margin-left: 5px; }
.tool.cell { min-width: 24px; padding-left: 4px; }
.tool.active { width: 24px; height: 22px; margin-top: 1px; padding-left: 3px; border: 1px solid #3f87cf; background: #cde0f4; }
.tool-row { display: flex; }
.combo { height: 22px; margin: 1px 1px 1px 0; flex: 1 1 auto; display: flex; align-items: center; padding: 0 4px 0 0; border: 1px solid #d4d4d4; background: linear-gradient(#fff, #f2f2f2); color: #666; font-size: 13px; }
.combo .tri { border-top-color: #666; }
.p-layers .combo { flex: none; color: #999; }
.swatch { width: 16px; height: 15px; margin: 0 10px 0 12px; background: #808080; }
.swatch.slim { width: 2px; margin: 0 4px 0 0; background: none; }
.combo.faint { color: #aaa; }
.combo.faint .tri { border-top-color: #ccc; }
.rule { width: 59px; height: 1px; margin: 0 3px 0 8px; background: #000; }
.prop-row { height: 24px; display: flex; align-items: center; gap: 2px; padding-left: 1px; }
.wheel { width: 16px; height: 16px; border: 1px solid #777; border-radius: 50%; background: conic-gradient(#f5c242, #e8622c, #d8342f 30%, #7a3fb0 40%, #4456c4 60%, #3f9ac4 70%, #4fb548 85%, #c8d83a); }

.doc-tabs { height: 29px; display: flex; align-items: flex-end; padding: 0 0 0 18px; background: #b1b1b1; border-bottom: 4px solid #efefef; }
.doc-tab { position: relative; width: 128px; height: 23px; display: flex; align-items: center; padding-left: 14px; color: #111; font-size: 13px; }
.shape { position: absolute; left: -4px; top: 0; }
.doc-tab span, .doc-tab button { position: relative; }
.doc-tab button { margin: 0 14px 0 auto; }
.new-doc { margin: 0 0 4px 6px; }

.canvas { position: relative; flex: 1; min-height: 840px; background: #fff; overflow: hidden; }
.grid { position: absolute; inset: 0; width: 100%; height: 100%; }
.view-label { position: relative; padding: 6px 3px; color: #222; }
.cube { position: absolute; top: 10px; right: 24px; }
.cube text { font-family: "Noto Sans CJK SC", sans-serif; }
.wcs { position: absolute; top: 170px; right: 67px; width: 47px; height: 16px; gap: 5px; border-radius: 3px; background: #e8e8f2; color: #999; font: 10px "Liberation Sans", sans-serif; }
.nav-bar { position: absolute; top: 210px; right: 9px; width: 36px; height: 216px; border: 1px solid #b9b9b9; border-radius: 5px; background: rgba(240, 240, 240, .75); }
.edge { position: absolute; top: 0; bottom: 0; right: 0; width: 8px; background: #bcd1ec; border-right: 1px solid #000; box-shadow: inset -1px 0 #19c4f0; }
.meter { position: absolute; right: 2px; top: 626px; width: 8px; height: 57px; border: 1px solid #4b5563; border-radius: 4px; background: linear-gradient(#4b5563 27px, transparent 27px), repeating-linear-gradient(#35d46a 0 2px, #2b5b47 2px 3px); }
.ucs { position: absolute; left: 16px; bottom: 12px; }
.ucs text { font: 300 18px Lato, sans-serif; }
.sketch { position: absolute; left: 50%; top: 400px; width: 201px; height: 144px; margin-left: -209px; border: 1px solid #000; }

.dialog { position: absolute; left: 50%; top: 177px; width: 483px; margin-left: -242px; padding: 0 6px 6px; border: 1px solid #2c3a4a; border-radius: 6px; background: linear-gradient(100deg, #b8d4f4, #d3e5f9 12%, #a9cdf3 35%, #b4d5f6 60%, #d2e6fb 85%, #b9d7f8); box-shadow: inset 0 0 0 1px #e8f3fd; }
.dialog header { height: 28px; display: flex; align-items: center; gap: 5px; padding-left: 3px; color: #000; }
.x { align-self: flex-start; width: 47px; height: 19px; margin-left: auto; border: 1px solid #5d2320; border-top: 0; border-radius: 0 0 5px 5px; background: linear-gradient(#e5a99e, #cf6a5b 45%, #b93524 50%, #cf5543); }
.sheet { height: 302px; padding: 11px 34px 0 11px; border: 1px solid #55657a; background: #efefef; color: #000; font-family: "Liberation Serif", "Noto Sans CJK SC", sans-serif; }
.sheet-tabs { display: flex; align-items: flex-end; height: 21px; }
.sheet-tabs button { position: relative; height: 19px; padding: 0 3px; margin-bottom: 1px; border: 1px solid #8b8b95; border-left-width: 0; border-bottom: 0; background: linear-gradient(#f4f4f4, #d6d6d6); }
.sheet-tabs .on { z-index: 1; width: 52px; height: 21px; margin-bottom: 0; padding-left: 5px; border-left-width: 1px; background: #fff; justify-content: flex-start; }
.sheet-tabs .last { width: 46px; justify-content: flex-start; }
.page { height: 227px; margin-top: -1px; padding: 22px 0 0 30px; display: flex; gap: 12px; border: 1px solid #8b8b95; background: #fff; }
fieldset { position: relative; margin: 0; padding: 0; border: 1px solid #d2dde8; border-radius: 3px; display: flex; flex-direction: column; }
legend { margin-left: 5px; padding: 0 2px; line-height: 16px; }
.types { width: 171px; height: 154px; }
.types label { height: 20px; padding-left: 11px; }
.types legend + label { margin-top: 3px; }
.side { display: flex; flex-direction: column; gap: 3px; }
.mtext, .reuse { width: 162px; }
.mtext { height: 76px; }
.reuse { height: 77px; }
.mtext label { height: 18px; margin-left: 7px; gap: 4px; }
.reuse label { height: 18px; margin-left: 10px; }
fieldset label { display: flex; align-items: center; gap: 4px; white-space: nowrap; }
.off { color: #777; }
input[type="radio"], input[type="checkbox"] { appearance: none; flex: none; width: 12px; height: 12px; margin: 0; border: 1px solid #8e8f8f; background: linear-gradient(135deg, #cdd2d8, #fff); box-shadow: inset 0 0 0 1px #f3f3f3; }
input[type="radio"] { border-radius: 50%; }
input[type="radio"]:checked { background: radial-gradient(circle at 45% 40%, #7fd3f2, #0d4f86 3px, #0a2f54 3px, #e5eef5 4px); }
input[type="radio"]:disabled { border-color: #c4c4c4; background: #e6e6e6; }
input[type="checkbox"] { position: relative; width: 13px; height: 13px; }
input[type="checkbox"]:checked::before { content: ""; position: absolute; left: 3px; top: 0; width: 5px; height: 9px; border: solid #3a4fa3; border-width: 0 2px 2px 0; transform: rotate(40deg); }
.actions { display: flex; gap: 23px; padding: 10px 0 0 91px; }
.actions button { width: 73px; height: 19px; border: 1px solid #707070; border-radius: 3px; background: linear-gradient(#f2f2f2 45%, #ddd 50%, #cfcfcf); }
.actions .ok { border-color: #3c7fb1; box-shadow: inset 0 0 0 1px #3fc8f2; background: linear-gradient(#eaf4fa 45%, #cfe4f0 50%, #c4dcea); }

.command { position: absolute; left: 50%; bottom: 1px; width: 930px; margin-left: -465px; display: flex; flex-direction: column; align-items: flex-start; }
.hist { height: 15px; margin: 0 0 1px 57px; padding: 0 1px; border-radius: 2px; background: #707070; color: #f4f4f4; font: 13px/15px "Noto Sans CJK SC", sans-serif; white-space: nowrap; }
.hist span { font: 12px/15px "DejaVu Sans Mono", monospace; }
.hist.old { background: #919191; }
.bar { align-self: stretch; height: 27px; display: flex; align-items: center; gap: 4px; border: 1px solid #777; border-radius: 2px; background: #fff; padding-right: 3px; }
.grip { width: 53px; height: 25px; display: flex; align-items: center; gap: 10px; background: linear-gradient(#7b7b7b, #444); }
.grip i { width: 4px; height: 17px; margin: 0 -4px 0 4px; background: repeating-linear-gradient(#999 0 1px, #555 1px 3px); }
.bar input { flex: 1; min-width: 0; padding: 0; border: 0; outline: 0; background: none; color: #111; font: 700 12px "DejaVu Sans Mono", monospace; }
.tri.grey { border-top-color: #999; }
.up-tri { border: 4px solid transparent; border-bottom-color: #222; border-top: 0; }

.status { height: 30px; display: flex; border-top: 1px solid #c4c4c4; border-bottom: 2px solid #33414f; background: #b2b2b2; }
.layouts { display: flex; align-items: flex-start; padding-left: 10px; color: #666; }
.layouts button { position: relative; height: 17px; width: 54px; }
.layouts button::before { content: ""; position: absolute; inset: 0; background: #dedede; clip-path: polygon(0 0, 100% 0, 90% 88%, 84% 100%, 16% 100%, 10% 88%); }
.layouts button span { position: relative; }
.layouts .current { width: 50px; color: #000; font-weight: 700; }
.layouts .current::before { background: #fafafa; }
.layouts .add { width: 22px; margin-left: 2px; }
.layouts .add::before { display: none; }
.status-right { margin-left: auto; display: flex; padding-right: 4px; background: #e5e5e5; color: #111; }
.status-right button { height: 26px; border-left: 1px solid #efefef; color: #555; }
.status-right .bare { border-left-color: transparent; }
.status-right svg { width: 16px; height: 16px; fill: none; stroke: currentColor; }
.status-right button.on { color: #1e86f5; }
.on svg { filter: drop-shadow(0 0 2px #a8cdf8); }
.coords { width: 184px; padding-left: 9px; line-height: 25px; white-space: nowrap; }
.status-right .model { width: 31px; color: #000; font-weight: 700; }
.status-right .ratio { width: 38px; gap: 4px; color: #000; }
.units { width: 76px; height: 26px; display: flex; align-items: center; padding: 0 5px 0 7px; color: #000; font-weight: 700; }
.status-right .tri { border-top-color: #000; }

.marks { position: absolute; left: 50%; top: 0; margin-left: -480px; pointer-events: none; }
.watermark { position: absolute; right: 5px; bottom: 21px; color: #707070; opacity: .9; font: 900 37px/40px "Noto Sans CJK SC", sans-serif; pointer-events: none; }
</style>
